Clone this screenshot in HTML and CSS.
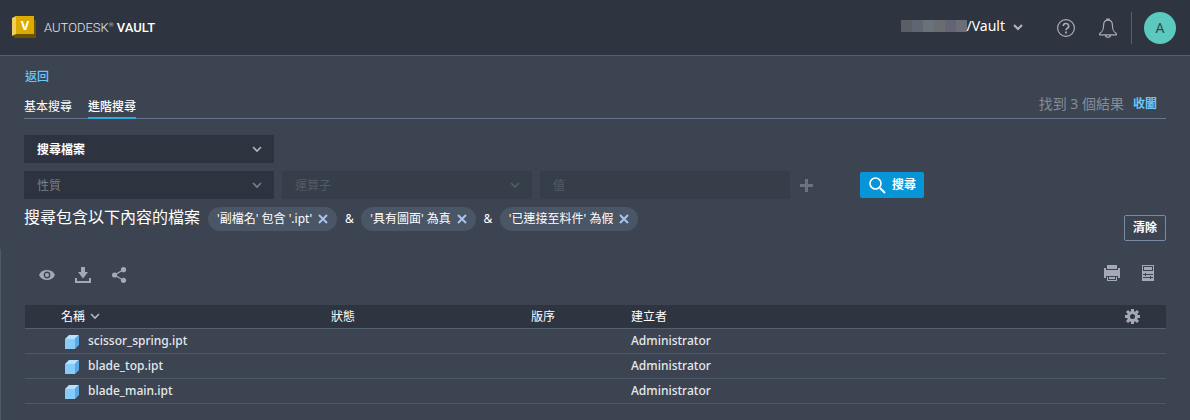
FILE: index.html
```html
<!DOCTYPE html>
<html lang="zh-Hant">
<head>
    <meta charset="UTF-8">
    <meta name="viewport" content="width=device-width, initial-scale=1.0">
    <title>Autodesk Vault</title>
    <link rel="stylesheet" href="styles.css">
</head>
<body>

<header class="topbar">
    <a class="brand" href="#">
        <svg class="brand-logo" width="25" height="23" viewBox="0 0 25 23">
            <path d="M2 18h20V4h2v18H2z" fill="#6b5200"/>
            <path d="M0 2l4-2v18l-4 2z" fill="#f0cd5c"/>
            <path d="M4 0h18v18H4z" fill="#dcab00"/>
            <text class="brand-letter" x="13" y="14" text-anchor="middle">V</text>
        </svg>
        <span class="brand-name">AUTODESK<sup>®</sup> <b>VAULT</b></span>
    </a>
    <div class="topbar-tools">
        <button class="vault-btn" type="button">
            <span class="masked"><i></i><i></i><i></i><i></i><i></i><i></i></span>/Vault
            <svg class="chevron" width="10" height="7" viewBox="0 0 10 7"><path d="M1 1l4 4 4-4"/></svg>
        </button>
        <button class="icon-btn help-btn" type="button" aria-label="說明">
            <svg width="18" height="18" viewBox="0 0 18 18" fill="none" stroke="#a9adb8">
                <circle cx="9" cy="9" r="8.4" stroke-width="1.2"/>
                <path d="M6.3 7a2.7 2.5 0 1 1 4 2.2Q9 9.9 9 11.2" stroke-width="1.6"/>
                <path d="M9 12.6v1.8" stroke-width="1.8"/>
            </svg>
        </button>
        <button class="icon-btn bell-btn" type="button" aria-label="通知">
            <svg width="18" height="20" viewBox="0 0 18 20" fill="none" stroke="#a9adb8" stroke-width="1.2">
                <path d="M8 2.4V1h2v1.4M9 2.2c-3 0-4.4 2.3-4.4 5 0 4.8-1 6.3-3.9 8.3v1.3h16.6v-1.3c-2.9-2-3.9-3.5-3.9-8.3 0-2.7-1.4-5-4.4-5zM6.5 17c0 3 5 3 5 0"/>
            </svg>
        </button>
        <button class="avatar" type="button">A</button>
    </div>
</header>

<main>
    <section class="search">
        <a class="back" href="#">返回</a>

        <div class="tabs-row">
            <nav class="tabs">
                <a class="tab" href="#">基本搜尋</a>
                <a class="tab active" href="#">進階搜尋</a>
            </nav>
            <div class="result-info">找到 3 個結果 <a href="#">收闔</a></div>
        </div>

        <form class="criteria">
            <div class="field field-type">
                <select aria-label="搜尋類型"><option>搜尋檔案</option></select>
                <svg class="chevron" width="10" height="7" viewBox="0 0 10 7"><path d="M1 1l4 4 4-4"/></svg>
            </div>
            <div class="criteria-row">
                <div class="field field-property">
                    <select aria-label="性質"><option>性質</option></select>
                    <svg class="chevron" width="10" height="7" viewBox="0 0 10 7"><path d="M1 1l4 4 4-4"/></svg>
                </div>
                <div class="field field-off">
                    <select aria-label="運算子" disabled><option>運算子</option></select>
                    <svg class="chevron" width="10" height="7" viewBox="0 0 10 7"><path d="M1 1l4 4 4-4"/></svg>
                </div>
                <div class="field field-off">
                    <input type="text" aria-label="值" placeholder="值" disabled>
                </div>
                <button class="icon-btn add-btn" type="button" aria-label="加入" disabled>
                    <svg width="13" height="13" viewBox="0 0 13 13"><path d="M5 0h3v5h5v3H8v5H5V8H0V5h5z" fill="#6a7280"/></svg>
                </button>
                <button class="search-btn" type="button">
                    <svg width="17" height="17" viewBox="0 0 17 17" fill="none" stroke="#fff">
                        <circle cx="6.5" cy="6.5" r="5.5" stroke-width="1.6"/>
                        <path d="M11 11l5 5" stroke-width="2"/>
                    </svg>
                    搜尋
                </button>
            </div>
        </form>

        <div class="filters">
            <h2>搜尋包含以下內容的檔案</h2>
            <span class="chip">'副檔名' 包含 '.ipt'
                <button type="button" aria-label="移除"><svg width="10" height="10" viewBox="0 0 10 10"><path d="M1 1l8 8M9 1L1 9"/></svg></button>
            </span>
            <span class="amp">&amp;</span>
            <span class="chip">'具有圖面' 為真
                <button type="button" aria-label="移除"><svg width="10" height="10" viewBox="0 0 10 10"><path d="M1 1l8 8M9 1L1 9"/></svg></button>
            </span>
            <span class="amp">&amp;</span>
            <span class="chip">'已連接至料件' 為假
                <button type="button" aria-label="移除"><svg width="10" height="10" viewBox="0 0 10 10"><path d="M1 1l8 8M9 1L1 9"/></svg></button>
            </span>
            <button class="clear-btn" type="button">清除</button>
        </div>
    </section>

    <section class="results">
        <div class="toolbar">
            <div class="tool-group">
                <button class="icon-btn" type="button" aria-label="檢視">
                    <svg width="16" height="16" viewBox="0 0 16 16">
                        <path d="M0 8c1.5-3.2 4.500-5 8-5s6.5 1.8 8 5c-1.5 3.2-4.500 5-8 5s-6.5-1.8-8-5z" fill="#a4a9b5"/>
                        <circle cx="8" cy="8" r="2.7" fill="#a4a9b5" stroke="#3c4452" stroke-width="1.4"/>
                    </svg>
                </button>
                <button class="icon-btn" type="button" aria-label="下載">
                    <svg width="16" height="16" viewBox="0 0 16 16" fill="#a4a9b5">
                        <path d="M6 0h4v5h3l-5 6.5L3 5h3zM0 11h2v3h12v-3h2v5H0z"/>
                    </svg>
                </button>
                <button class="icon-btn" type="button" aria-label="共用">
                    <svg width="16" height="16" viewBox="0 0 16 16" fill="#a4a9b5">
                        <path d="M12.5 2.7L3.5 8l9 5.3" fill="none" stroke="#a4a9b5" stroke-width="1.3"/>
                        <circle cx="12.5" cy="2.7" r="2.6"/><circle cx="3.6" cy="8" r="2.6"/><circle cx="12.5" cy="13.3" r="2.6"/>
                    </svg>
                </button>
            </div>
            <div class="tool-group output-tools">
                <button class="icon-btn" type="button" aria-label="列印">
                    <svg width="16" height="16" viewBox="0 0 16 16" fill="#a4a9b5">
                        <path d="M3 0h10v4H3zM0 3h2v2h12V3h2v10h-2v-2H2v2H0z"/>
                        <path d="M3 12h1v3h8v-3h1v4H3zM5 12h6v2H5z"/>
                    </svg>
                </button>
                <button class="icon-btn" type="button" aria-label="報告">
                    <svg width="12" height="16" viewBox="0 0 12 16">
                        <path d="M0 0h12v16H0z" fill="#a4a9b5"/>
                        <path d="M1 1h10v5H1zM1 9h2V8h1v3H3v-1H1zM4 9h7v1H4zM1 12h7v-1h1v3H8v-1H1zM9 12h2v1H9z" fill="#3c4452"/>
                        <path d="M2 2h8v3H2z" fill="#a4a9b5"/>
                    </svg>
                </button>
            </div>
        </div>

        <table class="files">
            <thead>
                <tr>
                    <th class="col-name">名稱 <svg class="chevron" width="10" height="7" viewBox="0 0 10 7"><path d="M1 1l4 4 4-4"/></svg></th>
                    <th class="col-state">狀態</th>
                    <th class="col-rev">版序</th>
                    <th>建立者</th>
                    <th class="col-gear">
                        <button class="icon-btn" type="button" aria-label="設定">
                            <svg width="15" height="15" viewBox="0 0 15 15">
                                <circle cx="7.5" cy="7.5" r="4" fill="none" stroke="#a4a9b5" stroke-width="3"/>
                                <path d="M7.5 0v3M7.5 12v3M0 7.5h3M12 7.5h3M2 2l2.3 2.3M10.7 10.7L13 13M13 2l-2.3 2.3M4.3 10.7L2 13" stroke="#a4a9b5" stroke-width="3"/>
                            </svg>
                        </button>
                    </th>
                </tr>
            </thead>
            <tbody>
                <tr>
                    <td class="file"><svg width="14" height="14" viewBox="0 0 14 14"><path d="M4 0h10l-4 4H0z" fill="#b7e1ff"/><path d="M0 4h10v10H0z" fill="#87cbfb"/><path d="M14 0v10l-4 4V4z" fill="#5ba9e4"/></svg>scissor_spring.ipt</td>
                    <td></td><td></td><td>Administrator</td><td></td>
                </tr>
                <tr>
                    <td class="file"><svg width="14" height="14" viewBox="0 0 14 14"><path d="M4 0h10l-4 4H0z" fill="#b7e1ff"/><path d="M0 4h10v10H0z" fill="#87cbfb"/><path d="M14 0v10l-4 4V4z" fill="#5ba9e4"/></svg>blade_top.ipt</td>
                    <td></td><td></td><td>Administrator</td><td></td>
                </tr>
                <tr>
                    <td class="file"><svg width="14" height="14" viewBox="0 0 14 14"><path d="M4 0h10l-4 4H0z" fill="#b7e1ff"/><path d="M0 4h10v10H0z" fill="#87cbfb"/><path d="M14 0v10l-4 4V4z" fill="#5ba9e4"/></svg>blade_main.ipt</td>
                    <td></td><td></td><td>Administrator</td><td></td>
                </tr>
            </tbody>
        </table>
    </section>
</main>

</body>
</html>
```
FILE: styles.css
```css
* { margin: 0; padding: 0; box-sizing: border-box; }
body { display: flex; flex-direction: column; min-height: 100vh; background: #3c4452; color: #fff; font-family: "Noto Sans", "Noto Sans CJK TC", sans-serif; font-size: 12px; line-height: 16px; }
main { flex: 1; display: flex; flex-direction: column; }
a { color: inherit; text-decoration: none; }
button, select, input { font: inherit; color: inherit; background: none; border: none; }
button { cursor: pointer; }
svg { display: block; flex: none; }
.icon-btn { display: flex; align-items: center; justify-content: center; }
.chevron { fill: none; stroke: #b0b5c0; stroke-width: 1.6; }

/* Top bar */
.topbar { display: flex; align-items: center; justify-content: space-between; height: 56px; padding: 0 14px 0 12px; background: #2e3440; border-bottom: 1px solid #566170; }
.brand { display: flex; align-items: center; gap: 7px; }
.brand-letter { font-family: "Noto Sans", sans-serif; font-size: 13px; font-weight: 700; fill: #fff; }
.brand-name { color: #e4e6ea; white-space: nowrap; font-family: Roboto, sans-serif; font-size: 13px; font-weight: 300; }
.brand-name sup { font-size: 6px; line-height: 6px; }
.brand-name b { font-weight: 500; color: #fff; }
.topbar-tools { display: flex; align-items: center; }
.vault-btn { display: flex; align-items: center; font-size: 14px; line-height: 20px; padding-bottom: 4px; }
.vault-btn .chevron { margin-left: 8px; margin-top: 4px; stroke-width: 2; }
.masked { display: flex; width: 66px; height: 12px; background: #61656f; }
.masked i { flex: 1; background: #5a5f66; }
.masked i:nth-child(2) { background: #5f6673; }
.masked i:nth-child(3) { background: #697278; }
.masked i:nth-child(4) { background: #6b6b72; }
.masked i:nth-child(5) { background: #646375; }
.masked i:nth-child(6) { background: #6b6e74; }
.help-btn { margin-left: 34px; }
.bell-btn { margin-left: 24px; padding-right: 14px; height: 32px; border-right: 1px solid #566170; }
.avatar { width: 32px; height: 32px; margin-left: 12px; border-radius: 50%; background: #5cc9be; color: #37474f; font-size: 14px; }

/* Search panel */
.search { padding: 13px 24px 8px; }
.back { display: inline-block; color: #6ac8f7; padding-left: 1px; font-weight: 500; }
.tabs-row { display: flex; justify-content: space-between; margin-top: 7px; height: 27px; border-bottom: 1px solid #66758a; }
.tabs { display: flex; gap: 16px; }
.tab { height: 27px; padding-top: 7px; }
.tab.active { font-weight: 500; border-bottom: 2px solid #32a8df; }
.result-info { display: flex; align-items: center; gap: 9px; padding: 0 9px 2px 0; color: #878c96; font-size: 14px; }
.result-info a { color: #6ac8f7; font-size: 12px; font-weight: 600; }
.criteria { display: flex; flex-direction: column; gap: 8px; margin-top: 16px; }
.criteria-row { display: flex; align-items: center; gap: 8px; }
.field { position: relative; width: 250px; height: 28px; background: #2d333f; }
.field select, .field input { width: 100%; height: 28px; padding: 1px 13px 0; appearance: none; border-radius: 0; opacity: 1; }
.field .chevron { position: absolute; right: 12px; top: 11px; pointer-events: none; }
.field-type { font-weight: 600; }
.field-property { color: #7b7f87; }
.field-property .chevron { stroke: #718096; }
.field-off { background: #363e4a; color: #535b67; }
.field-off .chevron { stroke: #535d6b; }
.field input::placeholder { color: #535b67; }
.add-btn { width: 16px; }
.search-btn { display: flex; align-items: center; gap: 6px; height: 26px; margin-left: 38px; padding: 0 8px 0 9px; border-radius: 2px; background: #0696d7; font-weight: 600; white-space: nowrap; }
.filters { display: flex; margin-top: 8px; height: 34px; }
.filters h2 { font-size: 16px; font-weight: 400; line-height: 20px; margin-right: 8px; white-space: nowrap; }
.chip { display: flex; align-items: center; gap: 6px; height: 24px; padding: 0 9px; border-radius: 12px; background: #4a5566; white-space: nowrap; }
.chip button svg { fill: none; stroke: #a9c4ea; stroke-width: 2; }
.amp { width: 24px; line-height: 24px; text-align: center; }
.clear-btn { height: 26px; margin-left: auto; padding: 0 8px; border: 1px solid #7a8aa0; border-radius: 2px; font-weight: 600; align-self: flex-end; }

/* Results */
.results { flex: 1; padding: 15px 24px; border-left: 1px solid #4d5868; }
.toolbar { display: flex; justify-content: space-between; align-items: flex-start; height: 41px; padding: 0 12px 0 14px; }
.tool-group { display: flex; align-items: center; gap: 20px; height: 22px; }
.output-tools { gap: 22px; height: 18px; }
.files { width: 100%; border-collapse: separate; border-spacing: 0; table-layout: fixed; }
.files th { height: 24px; text-align: left; font-weight: 400; background: #2e3440; border-bottom: 1px solid #566170; }
.files td { height: 25px; border-bottom: 1px solid #4d5868; color: #e6e8eb; font-weight: 500; }
.files .col-name { width: 306px; padding-left: 36px; }
.col-name .chevron { display: inline-block; margin-left: 2px; vertical-align: 1px; }
.col-state { width: 200px; }
.col-rev { width: 100px; }
.col-gear { width: 41px; }
.files .file { padding-left: 40px; }
.file svg { display: inline-block; vertical-align: middle; margin-right: 9px; }
```
